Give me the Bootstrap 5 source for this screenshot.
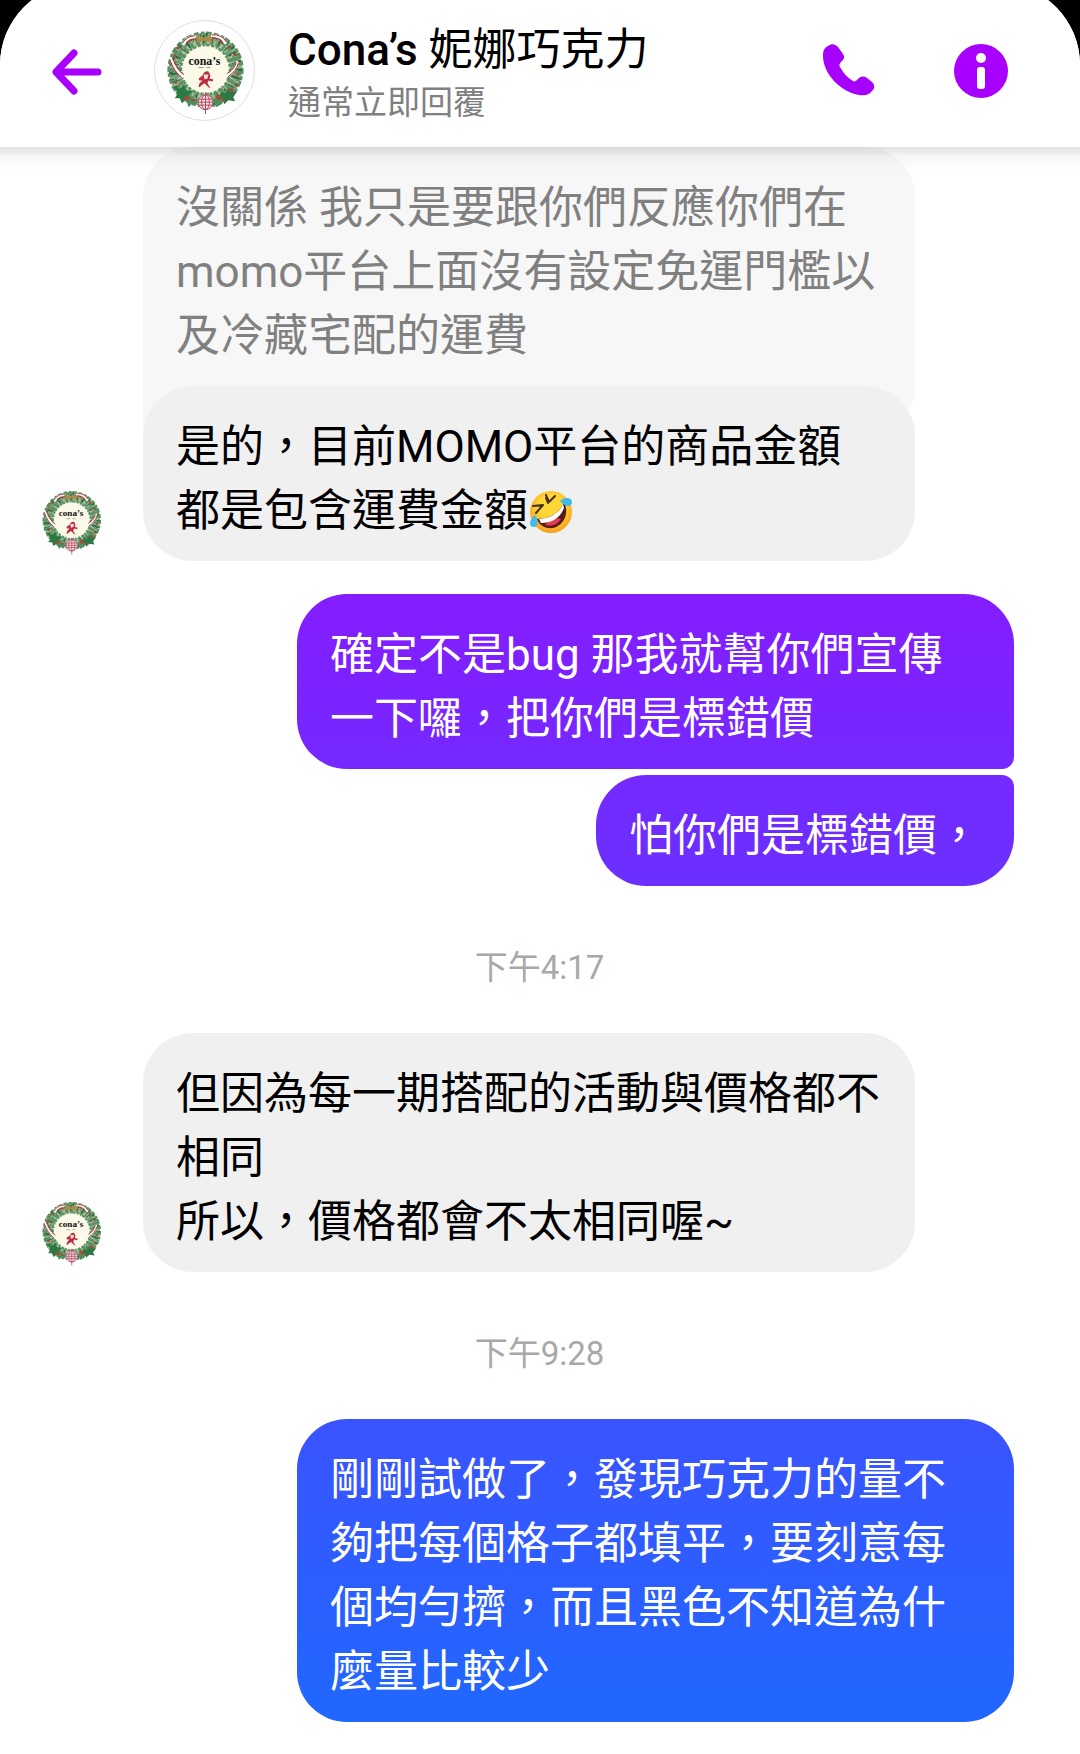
<!DOCTYPE html>
<html lang="zh-Hant">
<head>
<meta charset="utf-8">
<meta name="viewport" content="width=device-width, initial-scale=1">
<title>Cona’s 妮娜巧克力</title>
<link href="https://cdn.jsdelivr.net/npm/bootstrap@5.3.0/dist/css/bootstrap.min.css" rel="stylesheet">
<style>
  body { background: #000; font-family: Roboto, "Noto Sans CJK TC", sans-serif; color: #000; overflow-x: hidden; }
  .screen { margin-top: -17px; min-height: calc(100vh + 17px); background: #fff; border-radius: 82px 82px 0 0; }
  .topbar { height: 164px; padding: 17px 66px 6px 46px; background: #fff; border-radius: 82px 82px 0 0; z-index: 2; }
  .topbar-shade { height: 24px; margin-bottom: -24px; z-index: 2; background: linear-gradient(rgba(0,0,0,.12), rgba(0,0,0,.03) 40%, transparent); }
  .tool { color: #a800ff; background: none; border: 0; padding: 0; line-height: 0; }
  .tools { gap: 66px; }
  .back-btn { margin-right: 48px; }
  .face { border: 1px solid #dfdfdf; width: 101px; height: 101px; margin-right: 33px; }
  .shop-name { font-size: 44px; line-height: 64px; font-weight: 500; }
  .shop-name span { font-weight: 400; }
  .shop-note { font-size: 33px; line-height: 42px; color: #808080; }
  .thread { padding: 0 66px 32px 33px; }
  .bubble { font-size: 44px; line-height: 64px; padding: 29px 33px 18px; border-radius: 50px; overflow-wrap: anywhere; }
  .theirs { background: #f0f0f0; max-width: 772px; }
  .quoted { background: #f7f7f7; color: #808080; max-width: 772px; padding-bottom: 68px; margin: 0 0 -50px 110px; border-bottom-left-radius: 12px; }
  .mine { color: #fff; max-width: 717px; background: linear-gradient(#841dff 34%, #2067ff 98%) fixed; }
  .run-start { border-bottom-right-radius: 12px; }
  .run-end { border-top-right-radius: 12px; }
  .sent-group { gap: 6px; margin-top: 33px; }
  .mini-face { width: 76px; height: 76px; margin: 0 34px 2px 0; }
  .stamp { font-size: 33px; line-height: 44px; color: #a8a8a8; margin: 60px 0 43px; padding-left: 32px; }
  .emoji { width: 45px; height: 44px; vertical-align: -8px; }
</style>
<script src="https://cdn.jsdelivr.net/npm/bootstrap@5.3.0/dist/js/bootstrap.bundle.min.js"></script>
</head>
<body>
<div class="screen">
  <header class="topbar d-flex align-items-center position-relative">
    <button class="tool back-btn" type="button" aria-label="返回">
      <svg width="60" height="60" viewBox="0 0 60 60" fill="none" stroke="currentColor" stroke-width="7" stroke-linecap="round" stroke-linejoin="round"><path d="M28 12L10 31l18 19M10 31h42"/></svg>
    </button>
    <svg class="face rounded-circle flex-shrink-0" viewBox="0 0 100 100" role="img" aria-label="Cona’s">
      <g id="wreath">
        <circle cx="51" cy="49" r="31" fill="#fbf9e8"/>
        <g fill="none">
          <circle cx="51" cy="49" r="31" stroke="#7ba57c" stroke-width="12"/>
          <circle cx="51" cy="49" r="31" stroke="#5d9165" stroke-width="15" stroke-dasharray="4 2 3 1 5 2"/>
          <circle cx="51" cy="49" r="34" stroke="#8fb488" stroke-width="4" stroke-dasharray="2 3 3 4"/>
          <circle cx="51" cy="49" r="28" stroke="#a6c29a" stroke-width="4" stroke-dasharray="2 5 3 4"/>
          <circle cx="51" cy="49" r="31" stroke="#2d6b40" stroke-width="8" stroke-dasharray="1 6 2 8"/>
          <circle cx="51" cy="49" r="35" stroke="#2d6b40" stroke-width="4" stroke-dasharray="2 7 1 5"/>
          <circle cx="51" cy="49" r="31" stroke="#c3a08a" stroke-width="2" stroke-dasharray="1 9 2 12"/>
        </g>
        <path fill="#2a7a43" d="M20 66l7 3 1-6 4 7 6 1-4 4 3 6-6-1-4 3-2-5-5 0 3-5zM67 72l5 1 2-6 3 5 6-1-4 6 2 4-7-1-4 4-2-5-5 0z"/>
        <path fill="#4b8f5b" d="M32 81l5-5 2 4 6-1-3 5-5 0-3 3zM60 78l5 2 4 0-2 4-5 3-1-4-4-2z"/>
        <g fill="#b0453a">
          <circle cx="23" cy="27" r="1.500"/><circle cx="20" cy="35" r="1.500"/><circle cx="21" cy="62" r="1.500"/><circle cx="32" cy="78" r="2.500"/><circle cx="38" cy="80" r="1.500"/>
          <circle cx="64" cy="77" r="2.500"/><circle cx="69" cy="80" r="1.500"/><circle cx="77" cy="70" r="2"/><circle cx="82" cy="65" r="1.500"/><circle cx="81" cy="34" r="1.500"/>
          <circle cx="75" cy="26" r="1.500"/><circle cx="36" cy="18" r="2"/><circle cx="67" cy="21" r="1.500"/><circle cx="84" cy="54" r="1.500"/>
        </g>
        <path fill="#a98b4a" d="M42 14l7 3 8-3 1 8-8-2-8 2z"/>
        <g fill="none" stroke-linecap="round">
          <path stroke="#fff" stroke-width="3" d="M40 16q-8 0-11 7M58 15q9-1 13 7M16 38q4 12 12 18M83 42q-2 8-9 13"/>
          <path stroke="#b32634" stroke-width="1" d="M40 15q-8 0-12 7M41 18q-7 1-10 6M58 14q9-1 14 7M58 17q8 0 11 6M15 39q4 12 12 18M18 38q4 11 11 16M84 43q-2 8-10 13M82 42q-2 7-9 11"/>
        </g>
        <text x="50" y="44" text-anchor="middle" font-family="Liberation Serif" font-weight="700" font-size="12" fill="#111">cona’s</text>
        <path stroke="#555" stroke-width=".6" d="M44 47h5M52 47h4"/>
        <path fill="#bd2c3c" d="M48 55q2-5 6-4l2 4-1 3 4 1-1 2-4-1-1 3 3 5-2-1-4-4-3 2-2 2-1-1 1-3 3-3-3 0-1-2z"/>
        <path fill="#f3e3dc" d="M49 54h5l-1 4-3 1z"/>
        <circle cx="51" cy="82" r="8" fill="#f5e4e4"/>
        <g fill="none" stroke="#b04a62" stroke-width="1">
          <circle cx="51" cy="82" r="7.500"/><ellipse cx="51" cy="82" rx="4" ry="7.500"/><path d="M44 79h14M43 82h16M44 85h14M51 72v22"/>
        </g>
      </g>
    </svg>
    <div class="flex-grow-1">
      <h1 class="shop-name m-0">Cona’s <span>妮娜巧克力</span></h1>
      <div class="shop-note">通常立即回覆</div>
    </div>
    <div class="tools d-flex">
      <button class="tool" type="button" aria-label="通話">
        <svg width="66" height="66" viewBox="0 0 66 66" fill="currentColor"><path d="M12 8c4-3 7-2 10 1l5 7c2 3 1 5-1 7-3 3-3 4-2 6 4 7 8 11 13 14 2 1 3 0 5-2 3-3 6-3 9-1l5 4c3 3 3 6 0 9-3 4-7 5-13 4C25 54 7 36 7 18c0-5 1-8 5-10z"/></svg>
      </button>
      <button class="tool" type="button" aria-label="資訊">
        <svg width="66" height="66" viewBox="0 0 66 66"><circle cx="33" cy="33" r="27" fill="currentColor"/><circle cx="33" cy="20" r="5" fill="#fff"/><rect x="29" y="29" width="8" height="22" rx="3" fill="#fff"/></svg>
      </button>
    </div>
  </header>
  <div class="topbar-shade position-relative"></div>

  <main class="thread">
    <div class="bubble quoted">沒關係 我只是要跟你們反應你們在momo平台上面沒有設定免運門檻以及冷藏宅配的運費</div>
    <div class="d-flex align-items-end position-relative">
      <svg class="mini-face flex-shrink-0" viewBox="0 0 100 100" role="img" aria-label="Cona’s"><use href="#wreath"/></svg>
      <div class="bubble theirs">是的，目前MOMO平台的商品金額都是包含運費金額<svg class="emoji" viewBox="0 0 45 44" role="img" aria-label="笑到在地上打滾">
        <defs><radialGradient id="skin" cx=".5" cy=".4" r=".6"><stop offset=".5" stop-color="#fdd835"/><stop offset="1" stop-color="#f79c1c"/></radialGradient></defs>
        <circle cx="23" cy="22" r="21" fill="url(#skin)"/>
        <path d="M9 29Q29 29 36 12C42 24 35 36 25 38 17 39 11 35 9 29z" fill="#5a1a17"/>
        <path d="M17 35q6-9 16-6-6 9-16 6z" fill="#e5394f"/>
        <path d="M11 29Q29 28 35 14l1 4Q30 33 13 33z" fill="#fff"/>
        <path d="M5 16l10-1-7 8M18 5l3 7 6-6M18 8l2 5" fill="none" stroke="#4a2b20" stroke-width="2" stroke-linecap="round" stroke-linejoin="round"/>
        <path d="M7 25c4 5 3 12-1 12-6 0-5-7 1-12zM32 11c4-4 12-4 12 1 0 6-7 5-12-1z" fill="#40b9ed"/>
      </svg></div>
    </div>

    <div class="sent-group d-flex flex-column align-items-end">
      <div class="bubble mine run-start">確定不是bug 那我就幫你們宣傳一下囉，把你們是標錯價</div>
      <div class="bubble mine run-end">怕你們是標錯價，</div>
    </div>

    <div class="stamp text-center">下午4:17</div>

    <div class="d-flex align-items-end">
      <svg class="mini-face flex-shrink-0" viewBox="0 0 100 100" role="img" aria-label="Cona’s"><use href="#wreath"/></svg>
      <div class="bubble theirs">但因為每一期搭配的活動與價格都不相同<br>所以，價格都會不太相同喔~</div>
    </div>

    <div class="stamp text-center">下午9:28</div>

    <div class="d-flex justify-content-end">
      <div class="bubble mine">剛剛試做了，發現巧克力的量不夠把每個格子都填平，要刻意每個均勻擠，而且黑色不知道為什麼量比較少</div>
    </div>
  </main>
</div>
</body>
</html>
